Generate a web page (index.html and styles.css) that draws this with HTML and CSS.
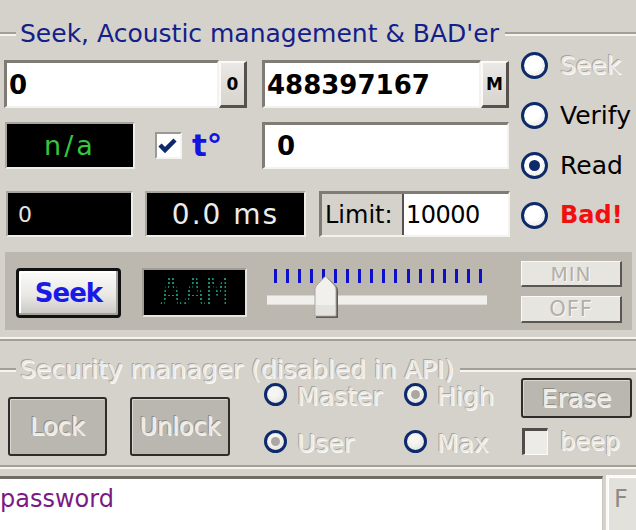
FILE: index.html
```html
<!DOCTYPE html>
<html>
<head>
<meta charset="utf-8">
<link rel="stylesheet" href="styles.css">
</head>
<body>
<div class="app">
  <div class="gtitle seek-title">
    <span class="ln ln-start"></span><span class="gtxt">Seek, Acoustic management &amp; BAD'er</span><span class="ln ln-end"></span>
  </div>
  <div class="seek-body">
    <div class="seek-left">
      <div class="row r1">
        <div class="sunken tb tb1">0</div>
        <div class="raised sbtn">0</div>
        <div class="sunken tb tb2">488397167</div>
        <div class="raised sbtn">M</div>
      </div>
      <div class="row r2">
        <div class="lcd lcd-na">n/a</div>
        <div class="chk"><svg viewBox="0 0 27 27" width="27" height="27"><polyline points="5,13 10,18 20,8" fill="none" stroke="#0e2a6c" stroke-width="4.5"/></svg></div>
        <div class="temp">t°</div>
        <div class="sunken tb tb3">0</div>
      </div>
      <div class="row r3">
        <div class="lcd lcd-0">0</div>
        <div class="lcd lcd-ms">0.0 ms</div>
        <div class="limit"><span class="limit-lbl">Limit:</span><span class="limit-val">10000</span></div>
      </div>
    </div>
    <div class="seek-radios">
      <div class="radio"><span class="rb"></span><span class="rl dis">Seek</span></div>
      <div class="radio"><span class="rb"></span><span class="rl">Verify</span></div>
      <div class="radio"><span class="rb on"></span><span class="rl">Read</span></div>
      <div class="radio"><span class="rb"></span><span class="rl bad">Bad!</span></div>
    </div>
  </div>
  <div class="panel">
    <div class="seek-btn">Seek</div>
    <div class="aam"><span class="dots">AAM</span></div>
    <div class="slider">
      <div class="ticks">
        <i></i><i></i><i></i><i></i><i></i><i></i><i></i><i></i><i></i><i></i><i></i><i></i><i></i><i></i><i></i><i></i><i></i><i></i>
      </div>
      <div class="track"></div>
      <svg class="thumb" viewBox="0 0 25 44" width="25" height="44">
        <path d="M2,43 L24,43 L24,15 Q24,13 22,11 L14,3 Q13,2 12,3 L4,11 Q2,13 2,15 Z" fill="#5e5b56"/>
        <path d="M1,41 L22,41 L22,14 Q22,12 20,10 L12.5,2 Q11.5,1 10.5,2 L3,10 Q1,12 1,14 Z" fill="#f2f0ec" stroke="#a8a59f" stroke-width="1"/>
        <rect x="2" y="30" width="19" height="10" fill="#e4e2dd"/>
      </svg>
    </div>
    <div class="mm-col">
      <div class="flatbtn">MIN</div>
      <div class="flatbtn off">OFF</div>
    </div>
  </div>
  <div class="group-bottom"></div>
  <div class="gtitle sec-title">
    <span class="ln ln-start"></span><span class="gtxt dis">Security manager (disabled in API)</span><span class="ln ln-end"></span>
  </div>
  <div class="sec-body">
    <div class="dbtn lock">Lock</div>
    <div class="dbtn unlock">Unlock</div>
    <div class="rcol rcol1">
      <div class="radio sr"><span class="rb dim"></span><span class="rl dis">Master</span></div>
      <div class="radio sr"><span class="rb dim on-dim"></span><span class="rl dis">User</span></div>
    </div>
    <div class="rcol rcol2">
      <div class="radio sr"><span class="rb dim on-dim"></span><span class="rl dis">High</span></div>
      <div class="radio sr"><span class="rb dim"></span><span class="rl dis">Max</span></div>
    </div>
    <div class="ercol">
      <div class="dbtn erase">Erase</div>
      <div class="beep"><span class="dchk"></span><span class="rl dis">beep</span></div>
    </div>
  </div>
  <div class="group-bottom sec-bottom"></div>
  <div class="pw-row">
    <div class="pw">password</div>
    <div class="fbtn">F</div>
  </div>
</div>
</body>
</html>
```
FILE: styles.css
```css
* { box-sizing: border-box; }
html, body { margin: 0; padding: 0; }
body {
  background: #d5d2cb;
  font-family: "DejaVu Sans", "Liberation Sans", sans-serif;
  color: #000;
}
.app {
  width: 636px;
  height: 530px;
  overflow: hidden;
}

/* group titles */
.gtitle {
  display: flex;
  align-items: center;
  height: 28px;
}
.seek-title { margin-top: 20px; }
.sec-title { margin-top: 15px; }
.ln {
  height: 4px;
  border-top: 2px solid #a39f97;
  border-bottom: 2px solid #f6f4f0;
}
.ln-start { width: 16px; }
.ln-end { flex: 1; }
.gtxt {
  font-size: 25px;
  color: #13208a;
  padding: 0 6px 0 4px;
  white-space: nowrap;
  line-height: 20px;
}
.dis {
  color: #eceae5;
  text-shadow: -1px -1px 0 #a9a59e, 1px 1px 0 #fbfaf8, 0 0 1px #a9a59e;
}

/* seek body */
.seek-body {
  display: flex;
  height: 189px;
}
.seek-left { width: 512px; }
.row { display: flex; align-items: center; }
.r1 { margin-top: 12px; height: 48px; }
.r2 { margin-top: 14px; height: 47px; }
.r3 { margin-top: 22px; height: 46px; }

.sunken {
  background: #fff;
  border-style: solid;
  border-width: 3px 2px 2px 3px;
  border-color: #7f7c76 #f4f2ee #f4f2ee #7f7c76;
}
.tb {
  display: flex;
  align-items: center;
  font-weight: bold;
  font-size: 26px;
  padding-left: 2px;
}
.tb1 { margin-left: 4px; width: 215px; height: 48px; }
.tb2 { margin-left: 15px; width: 219px; height: 48px; }
.tb3 { margin-left: auto; margin-right: 3px; width: 247px; height: 47px; padding-left: 12px; }

.raised {
  background: linear-gradient(#eae8e4, #d8d5cf);
  border-style: solid;
  border-width: 2px 3px 3px 2px;
  border-color: #fbfaf8 #55524d #55524d #fbfaf8;
  display: flex;
  align-items: center;
  justify-content: center;
}
.sbtn {
  width: 28px;
  height: 47px;
  font-weight: bold;
  font-size: 17px;
}

.lcd {
  background: #000;
  border-style: solid;
  border-width: 2px;
  border-color: #a9a59e #efede8 #efede8 #a9a59e;
  display: flex;
  align-items: center;
}
.lcd-na {
  margin-left: 5px;
  width: 130px;
  height: 47px;
  justify-content: center;
  color: #34c83a;
  font-size: 27px;
  letter-spacing: 3px;
}
.lcd-0 {
  margin-left: 6px;
  width: 127px;
  height: 46px;
  color: #e4e4e4;
  font-size: 22px;
  padding-left: 10px;
}
.lcd-ms {
  margin-left: 12px;
  width: 161px;
  height: 46px;
  justify-content: center;
  color: #ececec;
  font-size: 28px;
  letter-spacing: 2px;
}

.chk {
  margin-left: 20px;
  width: 27px;
  height: 27px;
  background: #fff;
  border-style: solid;
  border-width: 2px;
  border-color: #9c9992 #f6f4f0 #f6f4f0 #9c9992;
  display: flex;
  align-items: center;
  justify-content: center;
  overflow: hidden;
}
.chk svg { flex: none; }
.temp {
  margin-left: 10px;
  font-weight: bold;
  font-size: 31px;
  color: #1414e0;
  line-height: 1;
}

.limit {
  margin-left: 13px;
  width: 191px;
  height: 46px;
  display: flex;
  border-style: solid;
  border-width: 3px 2px 2px 3px;
  border-color: #7f7c76 #f4f2ee #f4f2ee #7f7c76;
  background: #fff;
}
.limit-lbl {
  width: 82px;
  background: #d5d2cb;
  border-right: 2px solid #55524d;
  font-size: 24px;
  display: flex;
  align-items: center;
  padding-left: 3px;
}
.limit-val {
  flex: 1;
  font-size: 24px;
  display: flex;
  align-items: center;
  padding-left: 2px;
  letter-spacing: -0.5px;
}

/* radios */
.seek-radios {
  width: 124px;
  margin-top: -8px;
}
.radio {
  display: flex;
  align-items: center;
  height: 50px;
}
.rb {
  flex: none;
  width: 27px;
  height: 27px;
  margin-left: 9px;
  border-radius: 50%;
  border: 3px solid #0d2a6b;
  background: radial-gradient(circle at 40% 35%, #ffffff 40%, #e2e0db 100%);
  position: relative;
}
.rb.on::after {
  content: "";
  position: absolute;
  left: 50%;
  top: 50%;
  width: 11px;
  height: 11px;
  margin: -5.5px 0 0 -5.5px;
  border-radius: 50%;
  background: #0d2a6b;
}
.rl {
  margin-left: 12px;
  font-size: 25px;
  white-space: nowrap;
}
.bad {
  color: #f01010;
  font-weight: bold;
  font-size: 24px;
}

/* panel */
.panel {
  margin: 15px 0 0 5px;
  width: 627px;
  height: 78px;
  background: #bcb8b0;
  display: flex;
  align-items: flex-start;
}
.seek-btn {
  margin: 16px 0 0 11px;
  width: 105px;
  height: 50px;
  border: 3px solid #111;
  border-radius: 4px;
  background: linear-gradient(#fbfbfa, #e9e8e5 55%, #c9c7c2);
  box-shadow: inset -2px -2px 0 #a6a39d, inset 2px 2px 0 #ffffff;
  display: flex;
  align-items: center;
  justify-content: center;
  color: #1a1ae8;
  font-weight: bold;
  font-size: 26px;
  letter-spacing: -1px;
}
.aam {
  margin: 16px 0 0 21px;
  width: 105px;
  height: 49px;
  background: #000;
  border-style: solid;
  border-width: 2px;
  border-color: #a09c94 #e6e4df #e6e4df #a09c94;
  display: flex;
  align-items: center;
  justify-content: center;
}
.dots {
  font-family: "DejaVu Sans Mono", monospace;
  font-size: 39px;
  line-height: 1;
  color: transparent;
  background: radial-gradient(circle, #1c8a70 1px, transparent 1.6px) 0 0 / 4px 4px;
  -webkit-background-clip: text;
  background-clip: text;
}
.slider {
  margin: 17px 0 0 20px;
  width: 220px;
  height: 48px;
  position: relative;
}
.ticks {
  margin-left: 7px;
  width: 208px;
  height: 14px;
  display: flex;
  justify-content: space-between;
}
.ticks i {
  display: block;
  width: 3px;
  height: 14px;
  background: #0c10c8;
}
.track {
  margin-top: 12px;
  width: 220px;
  height: 10px;
  background: #f1efeb;
  border-top: 1px solid #d8d6d1;
  border-bottom: 1px solid #dedcd7;
}
.thumb {
  position: absolute;
  left: 47px;
  top: 6px;
}
.mm-col {
  margin: 9px 0 0 34px;
  width: 101px;
  display: flex;
  flex-direction: column;
  gap: 9px;
}
.flatbtn {
  height: 26px;
  background: #e7e5e0;
  border-style: solid;
  border-width: 1px 2px 2px 1px;
  border-color: #fbfaf8 #5a5752 #5a5752 #fbfaf8;
  display: flex;
  align-items: center;
  justify-content: center;
  font-size: 20px;
  color: #b3afa8;
  text-shadow: 1px 1px 0 #fbfaf8;
  letter-spacing: 1px;
}
.flatbtn.off { height: 27px; font-size: 21px; }

.group-bottom {
  margin-top: 7px;
  height: 4px;
  border-top: 2px solid #f6f4f0;
  border-bottom: 2px solid #a39f97;
}

/* security */
.sec-body {
  display: flex;
  height: 81px;
}
.dbtn {
  background: #bab7b0;
  border: 2px solid #2e2d2b;
  border-radius: 3px;
  box-shadow: inset 1px 1px 0 #d8d6d1;
  display: flex;
  align-items: center;
  justify-content: center;
  font-size: 24px;
  color: #eceae5;
  text-shadow: -1px -1px 0 #8f8b85, 1px 1px 0 #f4f2ee;
}
.lock { margin: 13px 0 0 8px; width: 99px; height: 59px; }
.unlock { margin: 13px 0 0 23px; width: 100px; height: 59px; }
.rcol {
  display: flex;
  flex-direction: column;
  gap: 19px;
  margin-top: -4px;
}
.rcol1 { margin-left: 34px; width: 140px; }
.rcol2 { width: 117px; }
.radio.sr { height: 28px; }
.radio.sr .rb { margin-left: 0; width: 23px; height: 23px; }
.radio.sr .rl { margin-left: 10px; line-height: 0.9; padding-top: 6px; }
.rb.dim { background: radial-gradient(circle at 40% 35%, #f6f5f2 30%, #e0deda 100%); }
.rb.on-dim::after {
  content: "";
  position: absolute;
  left: 50%;
  top: 50%;
  width: 9px;
  height: 9px;
  margin: -4.5px 0 0 -4.5px;
  border-radius: 50%;
  background: #aaa6a0;
}
.ercol {
  margin-top: -6px;
  width: 115px;
}
.erase { width: 111px; height: 40px; font-size: 25px; }
.beep {
  margin-top: 10px;
  height: 27px;
  display: flex;
  align-items: center;
}
.dchk {
  flex: none;
  margin-left: 1px;
  width: 26px;
  height: 27px;
  background: #ecebe7;
  border-style: solid;
  border-width: 3px 1px 1px 3px;
  border-color: #4f4d49 #fbfaf8 #fbfaf8 #4f4d49;
}
.beep .rl { margin-left: 12px; font-size: 24px; }
.sec-bottom {
  border-top: 2px solid #a39f97;
  border-bottom: 2px solid #f6f4f0;
  margin-top: 0;
}

/* password row */
.pw-row {
  margin-top: 6px;
  height: 55px;
  display: flex;
  align-items: flex-start;
}
.pw {
  margin-top: 1px;
  width: 603px;
  height: 54px;
  background: #fff;
  border-top: 3px solid #6f6c67;
  border-right: 1px solid #c8c5bf;
  font-size: 24px;
  color: #7b1a82;
  padding: 6px 0 0 0;
}
.fbtn {
  margin-left: 3px;
  width: 30px;
  height: 55px;
  background: #e3e1dc;
  border-style: solid;
  border-width: 2px 0 0 2px;
  border-color: #fbfaf8;
  box-shadow: inset 1px 1px 0 #ffffff;
  font-size: 24px;
  color: #8e8b86;
  padding: 8px 0 0 6px;
}
```
